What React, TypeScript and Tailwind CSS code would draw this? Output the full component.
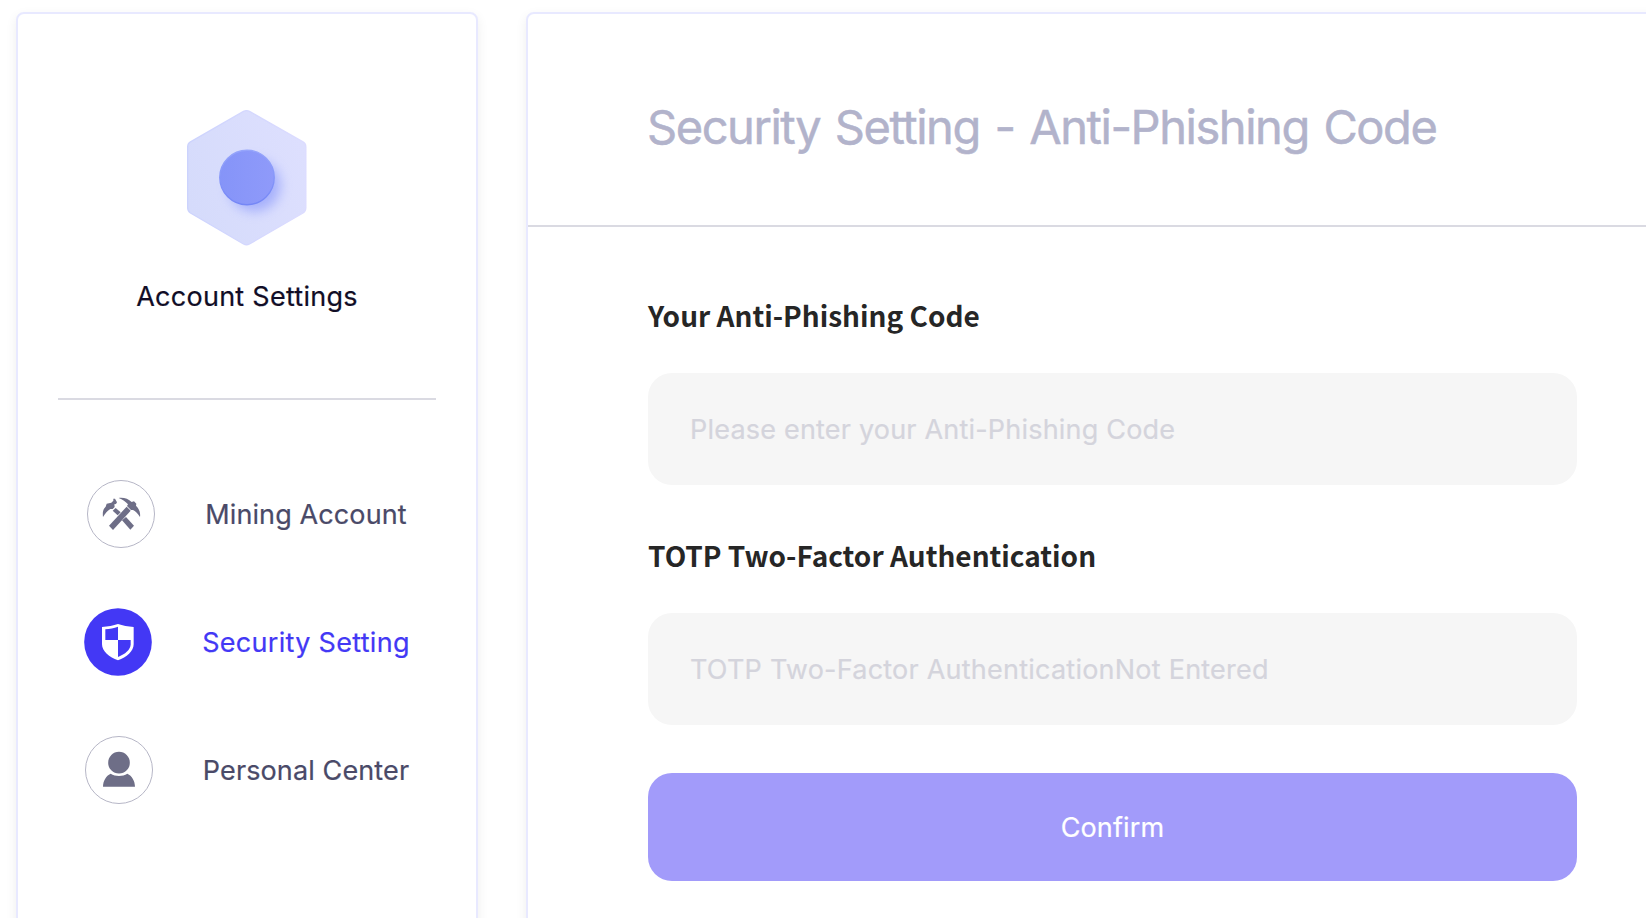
import type { ReactNode } from "react";

function HexagonLogo() {
  return (
    <svg width="136" height="144" viewBox="0 0 136 144" className="block">
      <defs>
        <linearGradient id="hexFill" x1="0" y1="0.7" x2="1" y2="0.3">
          <stop offset="0" stopColor="#d5dbfb" />
          <stop offset="1" stopColor="#dddffe" />
        </linearGradient>
        <linearGradient id="hexEdge" x1="0" y1="0" x2="1" y2="0">
          <stop offset="0" stopColor="#ccd3fd" />
          <stop offset="1" stopColor="#dcdcff" />
        </linearGradient>
        <linearGradient id="dotFill" x1="0" y1="0" x2="1" y2="0">
          <stop offset="0" stopColor="#8594f8" />
          <stop offset="1" stopColor="#8f9afa" />
        </linearGradient>
        <linearGradient id="dotEdge" x1="0" y1="0" x2="0" y2="1">
          <stop offset="0" stopColor="#96a5fb" />
          <stop offset="1" stopColor="#7486f6" />
        </linearGradient>
        <filter id="dotBlur" x="-50%" y="-50%" width="200%" height="200%">
          <feGaussianBlur stdDeviation="6" />
        </filter>
        <filter id="edgeBlur">
          <feGaussianBlur stdDeviation="0.6" />
        </filter>
      </defs>
      <path
        d="M64.500 5.400 Q67.500 3.800 70.500 5.400 L124 35.900 Q126.800 37.600 126.800 40.900 V101.800 Q126.800 105.200 124 107 L70.500 138 Q67.500 139.600 64.500 138 L11.500 107 Q8.700 105.200 8.700 101.800 V40.900 Q8.700 37.600 11.500 35.900 Z"
        fill="url(#hexFill)"
        stroke="url(#hexEdge)"
        strokeWidth="1.4"
        filter="url(#edgeBlur)"
      />
      <circle cx="75.500" cy="79.500" r="26" fill="#7c8bfb" opacity="0.55" filter="url(#dotBlur)" />
      <circle cx="68" cy="71.500" r="27.200" fill="url(#dotFill)" stroke="url(#dotEdge)" strokeWidth="1.4" />
    </svg>
  );
}

function PicksIcon() {
  return (
    <svg width="68" height="68" viewBox="21 15 204 204" className="block">
      <circle cx="123" cy="117" r="100.500" fill="#fff" stroke="#b6b6c6" strokeWidth="3" />
      <g fill="#6e6e87">
        <path d="M98 107 L107 99 L122 112 L113 121 Z" />
        <path d="M126 136 L138 126 L162 152 L151 164 Z" />
        <path d="M69 126 C67 111 70 101 77 95 L80 86 L94 83 L100 77 L100 71 L105 71 L111 82 L108 87 L103 88 L104 96 L98 102 L91 102 C82 108 76 115 69 126 Z" />
        <path d="M140 95 L152 107 L99 165 L87 152 Z" />
        <path d="M116 69 C132 67 145 72 155 81 L162 79 L169 86 L168 92 C177 101 182 113 180 126 C173 114 166 109 159 105 L153 105 L141 93 L144 88 C137 80 128 74 116 69 Z" />
      </g>
    </svg>
  );
}

function ShieldIcon() {
  return (
    <svg width="68" height="68" viewBox="18 18 204 204" className="block">
      <circle cx="120" cy="120" r="101.500" fill="#4338f5" />
      <path
        d="M120 66 C134 71 150 74 167 75 V127 C167 148 146 166 120 175 C94 166 72 148 72 127 V75 C90 74 106 71 120 66 Z"
        fill="#fff"
      />
      <path d="M120 74 C108 78 95 81 82 82 V114 H120 Z" fill="#4338f5" />
      <path d="M120 114 H158 V127 C158 143 141 157 120 165 Z" fill="#4338f5" />
    </svg>
  );
}

function PersonIcon() {
  return (
    <svg width="68" height="68" viewBox="21 18 204 204" className="block">
      <circle cx="123" cy="120" r="100.500" fill="#fff" stroke="#b6b6c6" strokeWidth="3" />
      <circle cx="123" cy="98" r="32.500" fill="#6e6e87" />
      <path d="M98 131 C112 140 134 140 148 131 C162 137 171 153 171 170 H75 C75 153 84 137 98 131 Z" fill="#6e6e87" />
    </svg>
  );
}

function NavItem({ icon, children, className }: { icon: ReactNode; children: ReactNode; className: string }) {
  return (
    <a className={`flex h-[68px] items-center gap-[50px] text-[27px] leading-8 whitespace-nowrap ${className}`}>
      {icon}
      <span className="pt-0.5">{children}</span>
    </a>
  );
}

function Field({ label, placeholder, className }: { label: string; placeholder: string; className: string }) {
  return (
    <label className="flex flex-col gap-[38px]">
      <span className="h-10 font-['Noto_Sans_CJK_SC',sans-serif] text-[28px] leading-10 font-bold text-[#262626] [-webkit-text-stroke:0]">
        {label}
      </span>
      <input
        type="text"
        placeholder={placeholder}
        className={`h-28 w-full rounded-3xl bg-[#f6f6f6] px-[42px] text-[27px] outline-none placeholder:text-[#d4d4dc] placeholder:opacity-100 ${className}`}
      />
    </label>
  );
}

export default function App() {
  return (
    <div className="flex h-[918px] w-[1646px] gap-12 overflow-hidden bg-white pt-3 pl-4 font-['Inter',sans-serif] [-webkit-text-stroke:0.2px]">
      <aside className="flex h-[1000px] w-[462px] shrink-0 flex-col items-center rounded-lg border-2 border-[#e8e9ff] bg-white shadow-[0_4px_12px_rgba(0,0,0,0.07)]">
        <div className="pt-[92px]">
          <HexagonLogo />
        </div>
        <h2 className="mt-[31px] text-[27px] leading-8 tracking-[0.26px] text-[#110d26]">Account Settings</h2>
        <div className="mt-[85px] h-0.5 w-[378px] bg-[#dadae2]" />
        <nav className="mt-20 flex flex-col items-center gap-[60px]">
          <NavItem icon={<PicksIcon />} className="tracking-[0.11px] text-[#4a4a68]">
            Mining Account
          </NavItem>
          <NavItem icon={<ShieldIcon />} className="tracking-[0.3px] text-[#4338f5]">
            Security Setting
          </NavItem>
          <NavItem icon={<PersonIcon />} className="tracking-[0.12px] text-[#4a4a68]">
            Personal Center
          </NavItem>
        </nav>
      </aside>
      <main className="h-[1000px] w-[1200px] shrink-0 rounded-lg border-2 border-[#e8e9ff] bg-white shadow-[0_4px_12px_rgba(0,0,0,0.07)]">
        <header className="h-[213px] border-b-2 border-[#dadae2] pt-[85px] pl-[119px]">
          <h1 className="text-[47px] leading-[56px] tracking-[-1.45px] text-[#b2b3cb] [word-spacing:2.9px] [-webkit-text-stroke:0.5px]">
            Security Setting - Anti-Phishing Code
          </h1>
        </header>
        <form className="ml-[120px] w-[929px] pt-[68px]">
          <div className="flex flex-col gap-[50px]">
            <Field
              label="Your Anti-Phishing Code"
              placeholder="Please enter your Anti-Phishing Code"
              className="tracking-[0.2px]"
            />
            <Field
              label="TOTP Two-Factor Authentication"
              placeholder="TOTP Two-Factor AuthenticationNot Entered"
              className="tracking-[0.23px]"
            />
          </div>
          <button
            type="button"
            className="mt-12 h-[108px] w-full rounded-3xl bg-[#a29bfa] pt-0.5 text-[27px] tracking-[0.15px] text-white"
          >
            Confirm
          </button>
        </form>
      </main>
    </div>
  );
}
